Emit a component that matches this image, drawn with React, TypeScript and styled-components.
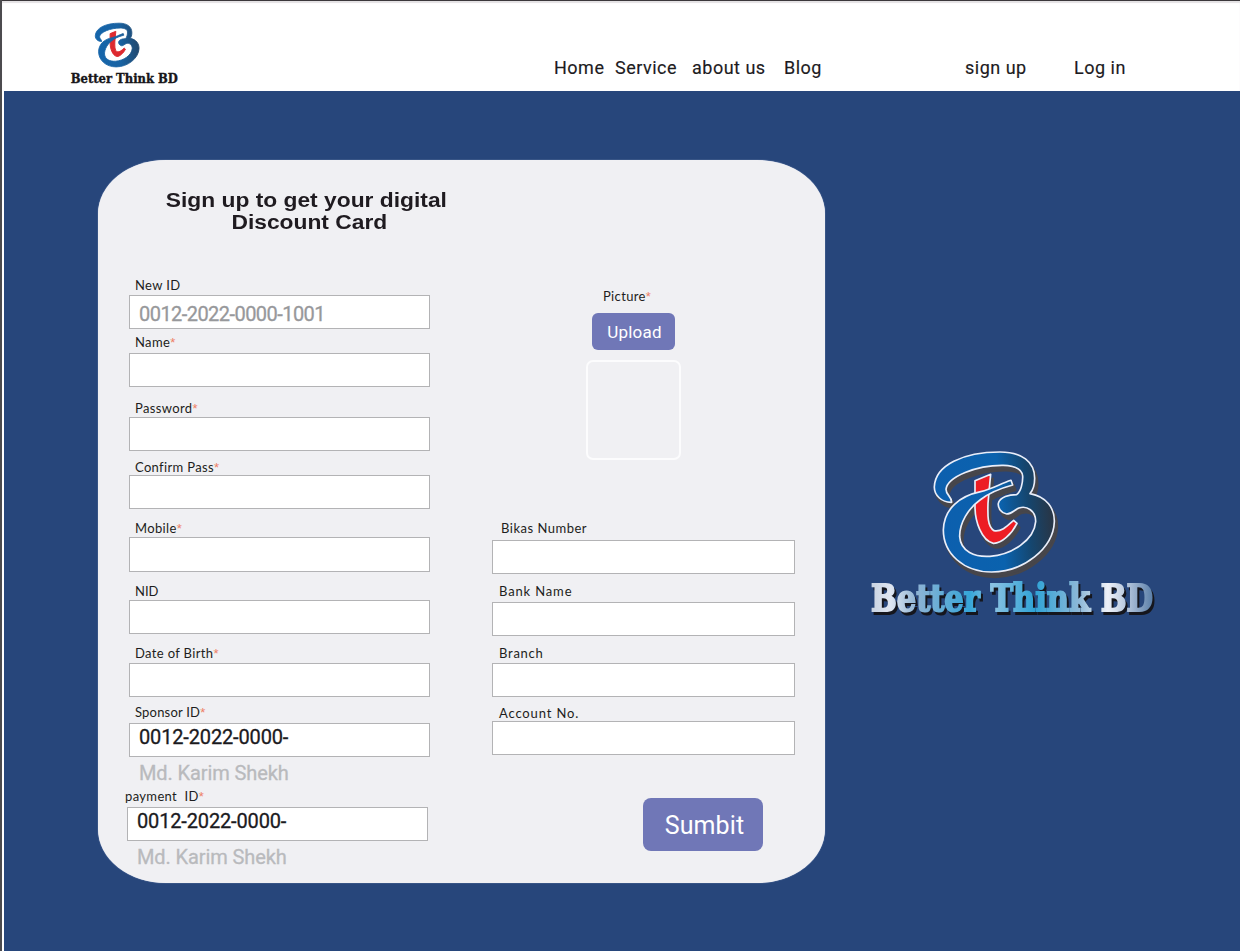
import React from "react";
import styled, { createGlobalStyle } from "styled-components";

const GlobalStyle = createGlobalStyle`
  *, *::before, *::after { box-sizing: border-box; }
  body { margin: 0; background: #fff; }
`;

const din = `Roboto, "Liberation Sans", sans-serif`;
const gothic = `Lato, "Open Sans", sans-serif`;

const Page = styled.div`
  display: flex;
  flex-direction: column;
  width: 1240px;
  height: 951px;
  overflow: hidden;
  background: #fff;
  border-left: 2px solid #4c4b4e;
`;

const Header = styled.header`
  display: flex;
  flex: none;
  height: 91px;
  border-top: 1px solid #3b383b;
  box-shadow: inset 0 2px 1px #e4e2e4;
`;

const Brand = styled.a`
  display: block;
  margin: 20px 0 0 66px;
  width: 114px;
  height: 70px;
`;

const Nav = styled.nav`
  display: flex;
  margin: 55px 0 0 372px;
`;

const NavLink = styled.a<{ $w: number }>`
  width: ${(p) => p.$w}px;
  font: 400 18px/24px ${din};
  letter-spacing: 0.5px;
  white-space: nowrap;
  color: #1d1b1e;
  -webkit-text-stroke: 0.15px #1d1b1e;
`;

const Main = styled.main`
  display: flex;
  flex: 1;
  margin-left: 2px;
  padding: 69px 0 0 94px;
  background: #27467b;
`;

const Card = styled.form`
  display: flex;
  flex: none;
  width: 727px;
  height: 723px;
  border-radius: 68px / 54px;
  background: #f0f0f3;
  box-shadow: 0 0 1px #d5dcf0;
`;

const LeftColumn = styled.div`
  display: flex;
  flex-direction: column;
  flex: none;
  width: 363px;
  padding: 29px 0 0 31px;
`;

const RightColumn = styled.div`
  display: flex;
  flex-direction: column;
  align-items: flex-start;
  padding: 129px 0 0 31px;
`;

const Title = styled.h1`
  display: flex;
  flex-direction: column;
  align-items: center;
  width: 282px;
  margin: 0 0 45px 36px;
  font: 700 20px/22px "Liberation Sans", Arial, sans-serif;
  color: #1f1b20;
  white-space: nowrap;
`;

const TitleLine = styled.span<{ $indent?: number }>`
  margin-left: ${(p) => p.$indent ?? 0}px;
  transform: scaleX(1.14);
`;

const FieldBox = styled.div<{ $mt: number; $shift?: number }>`
  display: flex;
  flex-direction: column;
  margin-top: ${(p) => p.$mt}px;
  margin-left: ${(p) => p.$shift ?? 0}px;
`;

const Label = styled.label<{ $indent: number; $gap: number; $ls?: number }>`
  height: 14px;
  margin: 0 0 ${(p) => p.$gap}px ${(p) => p.$indent}px;
  font: 400 13px/14px ${gothic};
  letter-spacing: ${(p) => p.$ls ?? 0.35}px;
  white-space: pre;
  color: #1d1d20;
`;

const Star = styled.span`
  color: #ee7f66;
  font: 400 13px/10px "Liberation Sans", Arial, sans-serif;
  letter-spacing: 0;
`;

const Input = styled.input<{ $w: number; $h: number; $tone: string; $top: number; $bottom: number; $ls: number }>`
  display: block;
  width: ${(p) => p.$w}px;
  height: ${(p) => p.$h}px;
  padding: ${(p) => p.$top}px 9px ${(p) => p.$bottom}px;
  border: 1px solid #b3b3b5;
  border-radius: 0;
  outline: none;
  background: #fff;
  font: 400 20px/24px ${din};
  letter-spacing: ${(p) => p.$ls}px;
  color: ${(p) => p.$tone};
  -webkit-text-stroke: 0.3px ${(p) => p.$tone};
`;

const Holder = styled.div<{ $indent: number }>`
  height: 24px;
  margin: 4px 0 0 ${(p) => p.$indent}px;
  font: 400 20px/25px ${din};
  letter-spacing: -0.1px;
  color: #b9babd;
  -webkit-text-stroke: 0.3px #b9babd;
`;

const Upload = styled.button`
  width: 83px;
  height: 37px;
  margin: 10px 0 10px 100px;
  padding: 1px 0 0 2px;
  border: 0;
  border-radius: 6px;
  background: #7077b7;
  color: #fff;
  font: 400 17px/20px ${din};
  letter-spacing: 0.25px;
`;

const Preview = styled.div`
  width: 95px;
  height: 100px;
  margin: 0 0 61px 94px;
  border: 2px solid #fcfcfd;
  border-radius: 7px;
`;

const Submit = styled.button`
  width: 120px;
  height: 53px;
  margin: 43px 0 0 151px;
  padding: 3px 0 0 3px;
  border: 0;
  border-radius: 8px;
  background: #7077b7;
  color: #fff;
  font: 400 25px/30px ${din};
  letter-spacing: 0.1px;
`;

const Poster = styled.div`
  width: 310px;
  height: 200px;
  margin: 280px 0 0 35px;
`;

const WordMark = styled.text`
  filter: drop-shadow(2.5px 3px 0 #15161d);
`;

const B_PATH =
  "M275 187C245 188 222 165 223 140C226 75 310 36 420 36C485 36 524 65 524 115C524 138 518 152 510 161C560 170 584 205 583 245C580 325 490 396 395 396C310 396 250 340 250 270C252 205 300 168 362 155C395 148 420 132 453 121L458 135C410 148 385 160 360 180C325 205 298 250 299 290C302 335 345 352 390 349C455 345 523 300 527 245C528 212 500 196 477 204C462 210 455 222 440 222C423 219 413 203 415 190C420 170 448 164 470 164C482 155 489 130 488 108C486 85 462 77 430 76C350 75 262 110 258 148C258 166 275 168 275 187Z";
const T_PATH =
  "M345 122L392 103L388 145L384 190C383 225 382 260 402 272C425 277 445 255 461 241L471 250C455 282 425 311 400 310C365 302 344 245 345 195Z";

function Shapes({ id }: { id: string }) {
  return (
    <>
      <path d={T_PATH} fill="#ed1c24" />
      <path d={B_PATH} fill={`url(#${id})`} />
    </>
  );
}

function SmallLogo() {
  return (
    <svg width="114" height="70" viewBox="0 0 114 70">
      <defs>
        <linearGradient id="small" gradientUnits="userSpaceOnUse" x1="222" y1="230" x2="585" y2="200">
          <stop offset="0" stopColor="#1565ab" />
          <stop offset="0.55" stopColor="#1963a3" />
          <stop offset="1" stopColor="#21476c" />
        </linearGradient>
      </defs>
      <g transform="translate(0.2 -2.2) scale(0.1215)">
        <path d={T_PATH} fill="#dd2a30" stroke="#dd2a30" strokeWidth="8" />
        <path d={B_PATH} fill="url(#small)" stroke="url(#small)" strokeWidth="7" />
      </g>
      <text
        x="2.8"
        y="61.5"
        textLength="107"
        lengthAdjust="spacingAndGlyphs"
        fontFamily="DejaVu Serif, serif"
        fontWeight="700"
        fontSize="13"
        fill="#17161a"
        stroke="#17161a"
        strokeWidth="0.4"
      >
        Better Think BD
      </text>
    </svg>
  );
}

function LargeLogo() {
  return (
    <svg width="310" height="200" viewBox="0 0 310 200">
      <defs>
        <linearGradient id="large" gradientUnits="userSpaceOnUse" x1="222" y1="230" x2="585" y2="200">
          <stop offset="0" stopColor="#0d5fae" />
          <stop offset="0.55" stopColor="#0a62ae" />
          <stop offset="0.78" stopColor="#15466f" />
          <stop offset="1" stopColor="#2b3340" />
        </linearGradient>
        <linearGradient id="word" x1="0" x2="1">
          <stop offset="0" stopColor="#c8d3e2" />
          <stop offset="0.07" stopColor="#dfe6f1" />
          <stop offset="0.16" stopColor="#8fb4d4" />
          <stop offset="0.35" stopColor="#35a5d8" />
          <stop offset="0.43" stopColor="#8cc3e2" />
          <stop offset="0.58" stopColor="#2fa3d6" />
          <stop offset="0.74" stopColor="#8fb9d8" />
          <stop offset="0.84" stopColor="#eef1f8" />
          <stop offset="0.92" stopColor="#a9bdd6" />
          <stop offset="1" stopColor="#5a7ea8" />
        </linearGradient>
      </defs>
      <g transform="scale(0.33333)">
        <g fill="#47464b" stroke="#47464b" strokeWidth="7" strokeLinejoin="round">
          <path d={T_PATH} transform="translate(7 13)" />
          <path d={B_PATH} transform="translate(8 15)" />
          <path d={B_PATH} transform="translate(4 8)" />
        </g>
        <g stroke="#e9eefa" strokeWidth="5" strokeLinejoin="round">
          <Shapes id="large" />
        </g>
      </g>
      <WordMark
        x="11"
        y="171"
        textLength="282"
        lengthAdjust="spacingAndGlyphs"
        fontFamily="DejaVu Serif, serif"
        fontWeight="700"
        fontSize="38"
        fill="url(#word)"
        stroke="url(#word)"
        strokeWidth="2"
      >
        Better Think BD
      </WordMark>
    </svg>
  );
}

type FieldProps = {
  label: string;
  mt: number;
  gap: number;
  required?: boolean;
  value?: string;
  indent?: number;
  shift?: number;
  w?: number;
  h?: number;
  tone?: string;
  top?: number;
  bottom?: number;
  ls?: number;
  labelLs?: number;
};

function Field({
  label, mt, gap, required, value = "", indent = 6, shift, w = 301, h = 34,
  tone = "#1b1a1e", top = 0, bottom = 0, ls = 0, labelLs,
}: FieldProps) {
  return (
    <FieldBox $mt={mt} $shift={shift}>
      <Label $indent={indent} $gap={gap} $ls={labelLs}>
        {label}
        {required && <Star>*</Star>}
      </Label>
      <Input defaultValue={value} $w={w} $h={h} $tone={tone} $top={top} $bottom={bottom} $ls={ls} />
    </FieldBox>
  );
}

export default function App() {
  return (
    <Page>
      <GlobalStyle />
      <Header>
        <Brand>
          <SmallLogo />
        </Brand>
        <Nav>
          <NavLink $w={61}>Home</NavLink>
          <NavLink $w={77}>Service</NavLink>
          <NavLink $w={92}>about us</NavLink>
          <NavLink $w={181}>Blog</NavLink>
          <NavLink $w={109}>sign up</NavLink>
          <NavLink $w={60}>Log in</NavLink>
        </Nav>
      </Header>
      <Main>
        <Card>
          <LeftColumn>
            <Title>
              <TitleLine>Sign up to get your digital</TitleLine>
              <TitleLine $indent={6}>Discount Card</TitleLine>
            </Title>
            <Field label="New ID" mt={0} gap={3} value="0012-2022-0000-1001" tone="#97989b" top={4} ls={-0.55} />
            <Field label="Name" mt={6} gap={4} required />
            <Field label="Password" mt={14} gap={2} required />
            <Field label="Confirm Pass" mt={9} gap={1} required />
            <Field label="Mobile" mt={12} gap={2} h={35} required />
            <Field label="NID" mt={12} gap={2} labelLs={0} />
            <Field label="Date of Birth" mt={12} gap={3} required />
            <Field label="Sponsor ID" mt={8} gap={4} value="0012-2022-0000-" bottom={6} ls={-0.15} labelLs={0.2} required />
            <Holder $indent={10}>Md. Karim Shekh</Holder>
            <Field label="payment  ID" mt={4} gap={4} indent={-2} shift={-2} value="0012-2022-0000-" bottom={6} ls={-0.15} required />
            <Holder $indent={8}>Md. Karim Shekh</Holder>
          </LeftColumn>
          <RightColumn>
            <Label $indent={111} $gap={0}>
              Picture<Star>*</Star>
            </Label>
            <Upload type="button">Upload</Upload>
            <Preview />
            <Field label="Bikas Number" mt={0} gap={5} indent={9} w={303} labelLs={0.5} />
            <Field label="Bank Name" mt={10} gap={4} indent={7} w={303} labelLs={0.85} />
            <Field label="Branch" mt={10} gap={3} indent={7} w={303} labelLs={0.75} />
            <Field label="Account No." mt={9} gap={1} indent={7} w={303} labelLs={0.85} />
            <Submit type="button">Sumbit</Submit>
          </RightColumn>
        </Card>
        <Poster>
          <LargeLogo />
        </Poster>
      </Main>
    </Page>
  );
}
